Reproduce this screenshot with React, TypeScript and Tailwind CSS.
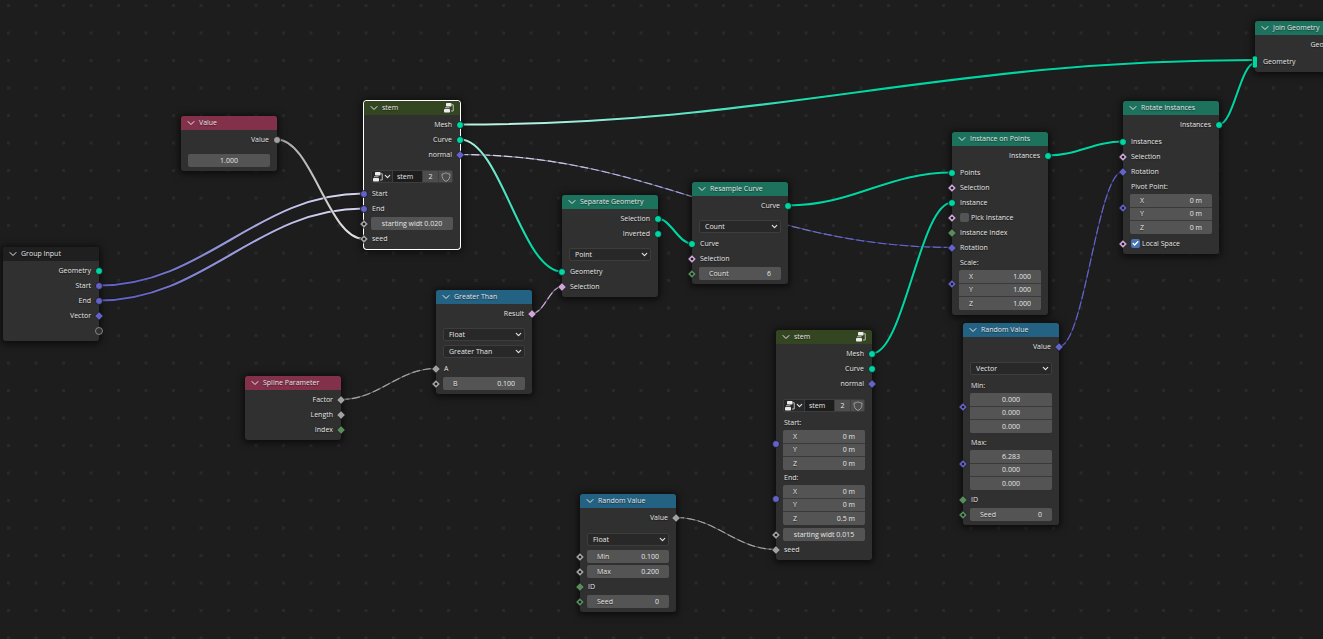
import type { ReactNode } from 'react';
import { Check, ChevronDown } from 'lucide-react';

type SocketKind = 'geometry' | 'vector' | 'vectorField' | 'vectorOpen' | 'float' | 'floatField' | 'floatOpen' | 'boolField' | 'boolOpen' | 'intField' | 'intOpen' | 'empty' | 'multi';
type Side = 'left' | 'right';

const TEAL = '#00d6a3';
const PURPLE = '#6363c7';
const GREY = '#a1a1a1';
const PINK = '#cca6d6';
const GREEN = '#598c5c';

const diamonds: Partial<Record<SocketKind, { color: string; dot: boolean }>> = {
    vectorField: { color: PURPLE, dot: false },
    vectorOpen: { color: PURPLE, dot: true },
    floatField: { color: GREY, dot: false },
    floatOpen: { color: GREY, dot: true },
    boolField: { color: PINK, dot: false },
    boolOpen: { color: PINK, dot: true },
    intField: { color: GREEN, dot: false },
    intOpen: { color: GREEN, dot: true },
};

const circles: Partial<Record<SocketKind, string>> = {
    geometry: TEAL,
    vector: PURPLE,
    float: GREY,
    empty: '#303030',
};

function Socket({ kind, side }: { kind: SocketKind; side: Side }) {
    const place = side === 'left' ? 'left-0 -translate-x-1/2' : 'right-0 translate-x-1/2';
    const diamond = diamonds[kind];

    return (
        <svg
            viewBox="0 0 10 14"
            className={`absolute top-1/2 h-3.5 w-2.5 -translate-y-1/2 ${place}`}
            aria-hidden="true"
        >
            {kind === 'multi' && <rect x="2.5" y="1" width="5" height="12" rx="1.5" fill={TEAL} stroke="#141414" strokeWidth="0.7" />}
            {diamond && <path d="M5 2.700 9.300 7 5 11.300 0.700 7Z" fill={diamond.color} stroke="#141414" strokeWidth="0.7" />}
            {diamond?.dot && <circle cx="5" cy="7" r="1.3" fill="#1d1d1d" />}
            {circles[kind] && (
                <circle
                    cx="5"
                    cy="7"
                    r="3.5"
                    fill={circles[kind]}
                    stroke={kind === 'empty' ? '#9a9a9a' : '#141414'}
                    strokeWidth="0.8"
                />
            )}
        </svg>
    );
}

function Row({ children, left, right }: { children: ReactNode; left?: SocketKind; right?: SocketKind }) {
    return (
        <div className="relative flex h-[15px] items-center px-[7px]">
            {left && <Socket kind={left} side="left" />}
            {children}
            {right && <Socket kind={right} side="right" />}
        </div>
    );
}

function Out({ label, kind }: { label?: string; kind: SocketKind }) {
    return (
        <Row right={kind}>
            <span className="ml-auto pr-px">{label}</span>
        </Row>
    );
}

function In({ label, kind }: { label: string; kind?: SocketKind }) {
    return (
        <Row left={kind}>
            <span className="pl-px">{label}</span>
        </Row>
    );
}

function Field({ label, value, kind }: { label: string; value: string; kind: SocketKind }) {
    return (
        <Row left={kind}>
            <label className="flex h-[13px] w-full items-center rounded-xs bg-[#545454] px-[10px]">
                <span>{label}</span>
                <input className="w-0 min-w-0 flex-1 bg-transparent text-right outline-none" defaultValue={value} />
            </label>
        </Row>
    );
}

function WideField({ text, label, kind }: { text: string; label: string; kind?: SocketKind }) {
    return (
        <Row left={kind}>
            <input
                aria-label={label}
                className="h-[13px] w-full rounded-xs bg-[#545454] text-center outline-none"
                defaultValue={text}
            />
        </Row>
    );
}

function VectorFields({ name, values, axes = true, kind }: { name: string; values: string[]; axes?: boolean; kind: SocketKind }) {
    return (
        <div className="relative px-[7px]">
            {/* the socket lines up with the first two fields, not with the whole block */}
            <div className="absolute inset-x-0 top-0 h-[27px]">
                <Socket kind={kind} side="left" />
            </div>
            <div className="relative flex flex-col gap-px overflow-hidden rounded-xs bg-[#3a3a3a]">
                {values.map((value, i) => (
                    <label key={i} className="flex h-[12px] items-center bg-[#545454] px-[10px] first:h-[13px] last:h-[13px]">
                        {axes && <span>{'XYZ'[i]}</span>}
                        <input
                            aria-label={`${name} ${'XYZ'[i]}`}
                            className={`w-0 min-w-0 flex-1 bg-transparent outline-none ${axes ? 'text-right' : 'text-center'}`}
                            defaultValue={value}
                        />
                    </label>
                ))}
            </div>
        </div>
    );
}

function Dropdown({ value, label }: { value: string; label: string }) {
    return (
        <Row>
            <div className="relative w-full">
                <select
                    aria-label={label}
                    className="block h-[13px] w-full appearance-none rounded-xs border border-[#3d3d3d] bg-[#282828] pl-[5px] outline-none"
                >
                    <option>{value}</option>
                </select>
                <ChevronDown className="pointer-events-none absolute top-[2px] right-[2px] size-[9px]" strokeWidth={3} />
            </div>
        </Row>
    );
}

function CheckRow({ label, checked = false, kind }: { label: string; checked?: boolean; kind: SocketKind }) {
    return (
        <Row left={kind}>
            <label className="relative flex items-center gap-[2px] pl-px">
                <input
                    type="checkbox"
                    defaultChecked={checked}
                    className="size-[9px] appearance-none rounded-xs bg-[#545454] checked:bg-[#4772b3]"
                />
                {checked && <Check className="pointer-events-none absolute left-[2px] size-[7px] text-white" strokeWidth={5} />}
                {label}
            </label>
        </Row>
    );
}

function NodeTreeIcon() {
    return (
        <svg viewBox="0 0 20 20" className="size-[10px] shrink-0" aria-hidden="true">
            <rect x="4" y="0" width="11" height="7" rx="1.5" fill="#ececec" />
            <rect x="0" y="12" width="12" height="7" rx="1.5" fill="#ececec" />
            <path d="M2 9.500h9M15 3.500h3.500V16H14" fill="none" stroke="#c8c8c8" strokeWidth="1.800" />
        </svg>
    );
}

function GroupPicker() {
    return (
        <Row>
            <div className="flex h-[13px] w-full gap-px overflow-hidden rounded-xs bg-[#3d3d3d] p-px">
                <button type="button" aria-label="Browse node groups" className="flex w-5 items-center justify-center bg-[#282828]">
                    <NodeTreeIcon />
                    <ChevronDown className="size-[9px]" strokeWidth={3} />
                </button>
                <input aria-label="Group name" className="w-0 min-w-0 flex-1 bg-[#1d1d1d] pl-[4px] outline-none" defaultValue="stem" />
                <button type="button" aria-label="Number of users" className="w-[15px] bg-[#4d4d4d]">2</button>
                <button type="button" aria-label="Fake user" className="flex w-[13px] items-center justify-center bg-[#4d4d4d]">
                    <svg viewBox="0 0 20 20" className="size-[10px]" aria-hidden="true">
                        <path d="M10 1.5C8 3 5 4 2 4c0 7 1.500 12 8 15 6.500-3 8-8 8-15-3 0-6-1-8-2.500Z" fill="none" stroke="#a3a3a3" strokeWidth="1.800" />
                    </svg>
                </button>
            </div>
        </Row>
    );
}

interface NodeProps {
    title: string;
    at: string;
    header: string;
    group?: boolean;
    selected?: boolean;
    children: ReactNode;
}

function Node({ title, at, header, group, selected, children }: NodeProps) {
    return (
        <section
            className={`absolute w-24 rounded-[3px] bg-[#303030] pb-[3px] ${at} ${
                selected ? 'shadow-[0_0_0_1px_#fff,0_1px_7px_3px_#00000080]' : 'shadow-[0_1px_7px_2px_#00000099]'
            }`}
        >
            <header className={`mb-0.5 flex h-[14px] items-center rounded-t-[3px] pr-[6px] pl-[4px] ${header}`}>
                <ChevronDown className="mr-[2px] size-3 shrink-0" strokeWidth={2} />
                <h2 className="flex-1 whitespace-nowrap">{title}</h2>
                {group && <NodeTreeIcon />}
            </header>
            {children}
        </section>
    );
}

const Gap = () => <div className="h-0.5" />;
const MidGap = () => <div className="h-1.5" />;
const WideGap = () => <div className="h-[7px]" />;

function Wire({ from, to, color, dashed = false }: { from: [number, number]; to: [number, number]; color: string; dashed?: boolean }) {
    const reach = (to[0] - from[0]) * 0.4;
    const d = `M${from[0]} ${from[1]}C${from[0] + reach} ${from[1]} ${to[0] - reach} ${to[1]} ${to[0]} ${to[1]}`;

    return (
        <g fill="none">
            <path d={d} stroke="#141414" strokeWidth={dashed ? 2 : 3.4} opacity={0.6} />
            {dashed && <path d={d} stroke={color} strokeWidth={1.2} opacity={0.55} />}
            <path d={d} stroke={color} strokeWidth={dashed ? 1.2 : 2.1} strokeDasharray={dashed ? '8 3' : undefined} />
        </g>
    );
}

function Gradient({ id, x1, x2, from, to }: { id: string; x1: number; x2: number; from: string; to: string }) {
    return (
        <linearGradient id={id} gradientUnits="userSpaceOnUse" x1={x1} x2={x2} y1="0" y2="0">
            <stop offset="0" stopColor={from} />
            <stop offset="1" stopColor={to} />
        </linearGradient>
    );
}

function Wires() {
    return (
        <svg className="absolute inset-0 size-full" aria-hidden="true">
            <defs>
                <pattern id="dots" x="7" y="4" width="27.5" height="27.5" patternUnits="userSpaceOnUse">
                    <rect width="3" height="3" fill="#292929" />
                </pattern>
                <Gradient id="toStem" x1={140} x2={330} from={PURPLE} to="#d4d4f0" />
                <Gradient id="toSeed" x1={277} x2={363} from={GREY} to="#ececec" />
                <Gradient id="meshOut" x1={520} x2={860} from="#baf2e4" to={TEAL} />
                <Gradient id="curveOut" x1={465} x2={535} from="#baf2e4" to={TEAL} />
                <Gradient id="normalOut" x1={520} x2={860} from="#d4d4f0" to={PURPLE} />
            </defs>
            <rect width="100%" height="100%" fill="url(#dots)" />
            <Wire from={[99, 285.5]} to={[363, 193.5]} color="url(#toStem)" />
            <Wire from={[99, 300.5]} to={[363, 208.5]} color="url(#toStem)" />
            <Wire from={[277, 139.5]} to={[363, 238.5]} color="url(#toSeed)" />
            <Wire from={[460, 154.5]} to={[952, 247.5]} color="url(#normalOut)" dashed />
            <Wire from={[460, 124.5]} to={[1255, 60]} color="url(#meshOut)" />
            <Wire from={[460, 139.5]} to={[562, 271.5]} color="url(#curveOut)" />
            <Wire from={[341, 399.5]} to={[436, 368.5]} color={GREY} dashed />
            <Wire from={[532, 313.5]} to={[562, 286.5]} color={PINK} dashed />
            <Wire from={[657, 218.5]} to={[692, 243.5]} color={TEAL} />
            <Wire from={[788, 205.5]} to={[952, 172.5]} color={TEAL} />
            <Wire from={[872, 353.5]} to={[952, 202.5]} color={TEAL} />
            <Wire from={[676, 517.5]} to={[776, 549.5]} color={GREY} dashed />
            <Wire from={[1048, 155.5]} to={[1123, 141.5]} color={TEAL} />
            <Wire from={[1059, 346.5]} to={[1123, 171.5]} color={PURPLE} dashed />
            <Wire from={[1219, 124.5]} to={[1255, 63]} color={TEAL} />
        </svg>
    );
}

export default function App() {
    return (
        <main className="relative h-screen w-full overflow-hidden bg-[#1d1d1d] font-['Open_Sans','Noto_Sans',sans-serif] text-[7px] leading-[10px] text-[#e6e6e6] [text-shadow:0_1px_1px_#00000080]">
            <Wires />

            <Node title="Group Input" at="left-[3px] top-[247px]" header="bg-[#1f1f1f]">
                <Out label="Geometry" kind="geometry" />
                <Out label="Start" kind="vector" />
                <Out label="End" kind="vector" />
                <Out label="Vector" kind="vectorField" />
                <Out kind="empty" />
            </Node>

            <Node title="Value" at="left-[181px] top-[116px]" header="bg-[#83314a]">
                <Out label="Value" kind="float" />
                <MidGap />
                <WideField label="Value" text="1.000" />
            </Node>

            <Node title="stem" at="left-[364px] top-[101px]" header="bg-[#344621]" group selected>
                <Out label="Mesh" kind="geometry" />
                <Out label="Curve" kind="geometry" />
                <Out label="normal" kind="vectorField" />
                <WideGap />
                <GroupPicker />
                <Gap />
                <In label="Start" kind="vector" />
                <In label="End" kind="vector" />
                <WideField label="starting width" text="starting widt 0.020" kind="floatOpen" />
                <In label="seed" kind="floatOpen" />
            </Node>

            <Node title="Spline Parameter" at="left-[245px] top-[376px]" header="bg-[#83314a]">
                <Out label="Factor" kind="floatField" />
                <Out label="Length" kind="floatField" />
                <Out label="Index" kind="intField" />
            </Node>

            <Node title="Greater Than" at="left-[436px] top-[290px]" header="bg-[#246283]">
                <Out label="Result" kind="boolField" />
                <MidGap />
                <Dropdown label="Data type" value="Float" />
                <Gap />
                <Dropdown label="Operation" value="Greater Than" />
                <Gap />
                <In label="A" kind="floatField" />
                <Field label="B" value="0.100" kind="floatOpen" />
            </Node>

            <Node title="Separate Geometry" at="left-[562px] top-[195px]" header="bg-[#1d725e]">
                <Out label="Selection" kind="geometry" />
                <Out label="Inverted" kind="geometry" />
                <MidGap />
                <Dropdown label="Domain" value="Point" />
                <Gap />
                <In label="Geometry" kind="geometry" />
                <In label="Selection" kind="boolField" />
            </Node>

            <Node title="Resample Curve" at="left-[692px] top-[182px]" header="bg-[#1d725e]">
                <Out label="Curve" kind="geometry" />
                <MidGap />
                <Dropdown label="Mode" value="Count" />
                <Gap />
                <In label="Curve" kind="geometry" />
                <In label="Selection" kind="boolOpen" />
                <Field label="Count" value="6" kind="intOpen" />
            </Node>

            <Node title="Random Value" at="left-[580px] top-[494px]" header="bg-[#246283]">
                <Out label="Value" kind="floatField" />
                <WideGap />
                <Dropdown label="Data type" value="Float" />
                <Gap />
                <Field label="Min" value="0.100" kind="floatOpen" />
                <Field label="Max" value="0.200" kind="floatOpen" />
                <In label="ID" kind="intField" />
                <Field label="Seed" value="0" kind="intOpen" />
            </Node>

            <Node title="stem" at="left-[776px] top-[330px]" header="bg-[#344621]" group>
                <Out label="Mesh" kind="geometry" />
                <Out label="Curve" kind="geometry" />
                <Out label="normal" kind="vectorField" />
                <WideGap />
                <GroupPicker />
                <Gap />
                <In label="Start:" />
                <VectorFields name="Start" values={['0 m', '0 m', '0 m']} kind="vector" />
                <In label="End:" />
                <VectorFields name="End" values={['0 m', '0 m', '0.5 m']} kind="vector" />
                <Gap />
                <WideField label="starting width" text="starting widt 0.015" kind="floatOpen" />
                <In label="seed" kind="floatField" />
            </Node>

            <Node title="Instance on Points" at="left-[952px] top-[132px]" header="bg-[#1d725e]">
                <Out label="Instances" kind="geometry" />
                <Gap />
                <In label="Points" kind="geometry" />
                <In label="Selection" kind="boolOpen" />
                <In label="Instance" kind="geometry" />
                <CheckRow label="Pick Instance" kind="boolOpen" />
                <In label="Instance Index" kind="intField" />
                <In label="Rotation" kind="vectorField" />
                <In label="Scale:" />
                <VectorFields name="Scale" values={['1.000', '1.000', '1.000']} kind="vectorOpen" />
                <Gap />
            </Node>

            <Node title="Random Value" at="left-[963px] top-[323px]" header="bg-[#246283]">
                <Out label="Value" kind="vectorField" />
                <WideGap />
                <Dropdown label="Data type" value="Vector" />
                <Gap />
                <In label="Min:" />
                <VectorFields name="Min" values={['0.000', '0.000', '0.000']} axes={false} kind="vectorOpen" />
                <Gap />
                <In label="Max:" />
                <VectorFields name="Max" values={['6.283', '0.000', '0.000']} axes={false} kind="vectorOpen" />
                <Gap />
                <In label="ID" kind="intField" />
                <Field label="Seed" value="0" kind="intOpen" />
            </Node>

            <Node title="Rotate Instances" at="left-[1123px] top-[101px]" header="bg-[#1d725e]">
                <Out label="Instances" kind="geometry" />
                <Gap />
                <In label="Instances" kind="geometry" />
                <In label="Selection" kind="boolOpen" />
                <In label="Rotation" kind="vectorField" />
                <In label="Pivot Point:" />
                <VectorFields name="Pivot Point" values={['0 m', '0 m', '0 m']} kind="vectorOpen" />
                <Gap />
                <CheckRow label="Local Space" kind="boolOpen" checked />
            </Node>

            <Node title="Join Geometry" at="left-[1255px] top-[21px]" header="bg-[#1d725e]">
                <Out label="Geometry" kind="geometry" />
                <Gap />
                <In label="Geometry" kind="multi" />
            </Node>
        </main>
    );
}
